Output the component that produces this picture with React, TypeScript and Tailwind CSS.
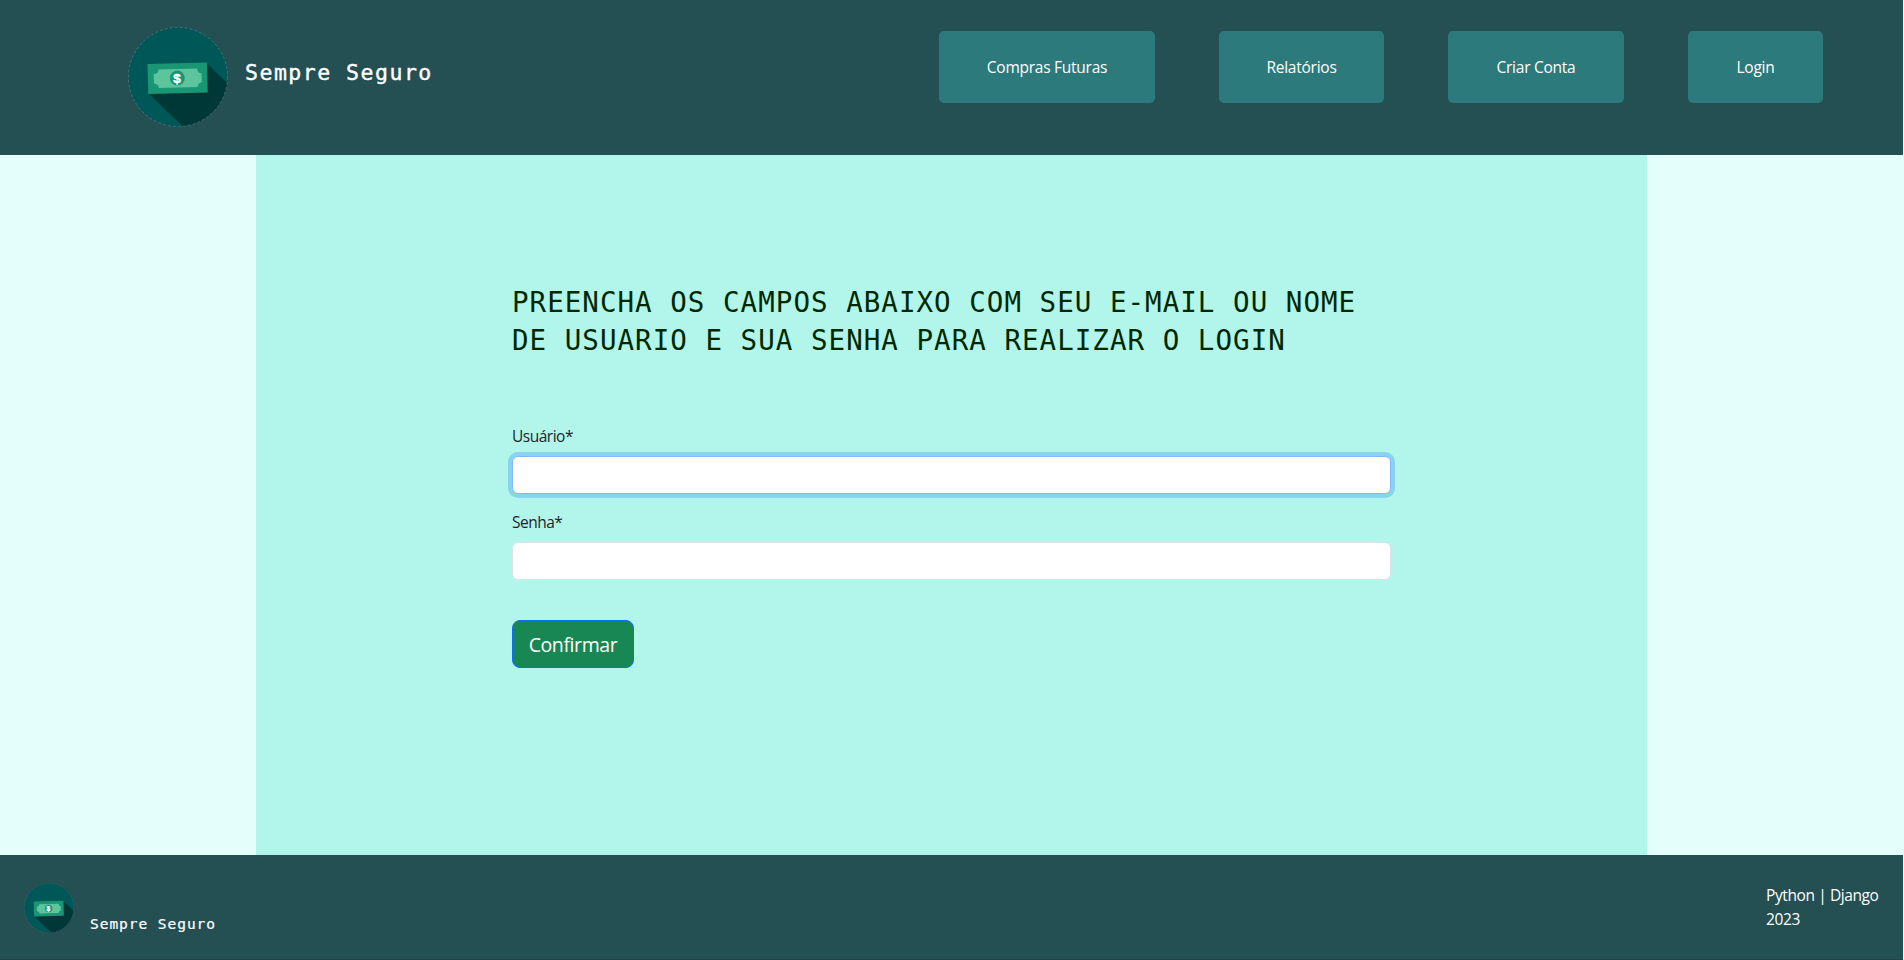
import React from "react";

const sans = "font-['Open_Sans','Noto_Sans',sans-serif]";

function Logo({ className }: { className: string }) {
  return (
    <svg viewBox="0 0 100 100" className={className} aria-hidden="true">
      <defs>
        <clipPath id="disc">
          <circle cx="50" cy="50" r="49.6" />
        </clipPath>
      </defs>
      <circle cx="50" cy="50" r="49.6" fill="#005757" />
      <path d="M21 67L79.5 37L110 66L90 110H66Z" fill="#003838" clipPath="url(#disc)" />
      <circle cx="50" cy="50" r="49.6" fill="none" stroke="#6b9292" strokeWidth="0.5" strokeDasharray="3 2" />
      <path d="M19.5 37L79 35.5L79.7 65.5L20.3 67Z" fill="#199674" />
      <path
        d="M30.5 42.5L69 41.5C69.3 44.5 71 46.2 73.5 46.3L73.8 55.2C71.3 55.5 69.8 57.2 69.6 60L31 61C30.6 58.2 29 56.8 26 56.5L25.7 47.3C28.7 47 30.3 45.5 30.5 42.5Z"
        fill="#5cc59b"
      />
      <circle cx="49.3" cy="51" r="7.5" fill="#199674" />
      <text x="49" y="55.8" textAnchor="middle" fontSize="13.5" fontWeight="700" fill="#fff" stroke="#fff" strokeWidth="0.5" fontFamily="Liberation Sans, sans-serif">
        $
      </text>
    </svg>
  );
}

const links = [
  { label: "Compras Futuras", width: "w-[216px]" },
  { label: "Relatórios", width: "w-[165px]" },
  { label: "Criar Conta", width: "w-[176px]" },
  { label: "Login", width: "w-[135px]" },
];

export default function App() {
  return (
    <div className="bg-[#f4f6f6] pr-px">
      <div className={`flex h-[960px] w-full flex-col overflow-hidden bg-[#e4fefb] text-[#212529] ${sans}`}>
        <header className="flex h-[155px] shrink-0 items-start justify-between bg-[#244f53] pr-20 pl-32">
          <div className="flex items-start">
            <Logo className="mt-[27px] size-[100px]" />
            <span className="mt-[55px] ml-[17px] font-['DejaVu_Sans_Mono',monospace] text-[21.5px] leading-9 tracking-[1.5px] text-white [-webkit-text-stroke:0.4px_white]">
              Sempre Seguro
            </span>
          </div>
          <nav className="mt-[31px] flex gap-16">
            {links.map((l) => (
              <a
                key={l.label}
                href="#"
                className={`flex h-[72px] items-center justify-center rounded-[5px] bg-[#2c7a7b] pt-px text-[15.5px] tracking-[-0.25px] whitespace-nowrap text-white ${l.width}`}
              >
                {l.label}
              </a>
            ))}
          </nav>
        </header>

        <main className="mx-64 flex-1 bg-[#b2f5ea] px-64 pt-32">
          <h1 className="font-['DejaVu_Sans_Mono',monospace] text-[27.5px] leading-[38px] tracking-[1.03px] whitespace-nowrap text-[#002800]">
            PREENCHA OS CAMPOS ABAIXO COM SEU E-MAIL OU NOME
            <br />
            DE USUARIO E SUA SENHA PARA REALIZAR O LOGIN
          </h1>
          <form className="mt-[65px]">
            <label className="block text-[15.5px] leading-6 tracking-[-0.5px]">Usuário*</label>
            <input className="mt-2 block h-[38px] w-full rounded-md border border-[#86b7fe] bg-white px-3 shadow-[0_0_0_4px_rgba(13,110,253,0.25)] outline-none" />
            <label className="mt-4 block text-[15.5px] leading-6 tracking-[-0.5px]">Senha*</label>
            <input type="password" className="mt-2 block h-[38px] w-full rounded-md border border-[#dee2e6] bg-white px-3 outline-none" />
            <button
              type="button"
              className="mt-10 flex h-12 w-[122px] items-center justify-center rounded-lg border border-[#0d6efd] bg-[#198754] pt-px text-[19.5px] tracking-[-0.4px] text-white"
            >
              Confirmar
            </button>
          </form>
        </main>

        <footer className="flex h-[105px] shrink-0 items-start justify-between border-b border-[#1f4447] bg-[#244f53] px-6 text-white">
          <div className="flex">
            <Logo className="mt-7 size-[50px]" />
            <span className="mt-[57px] ml-4 font-['DejaVu_Sans_Mono',monospace] text-[14.5px] leading-6 tracking-[0.96px] [-webkit-text-stroke:0.2px_white]">
              Sempre Seguro
            </span>
          </div>
          <div className="mt-7 w-[113px] text-[15.5px] leading-6 tracking-[-0.4px] whitespace-nowrap">
            <p>Python | Django</p>
            <p>2023</p>
          </div>
        </footer>
      </div>
    </div>
  );
}
